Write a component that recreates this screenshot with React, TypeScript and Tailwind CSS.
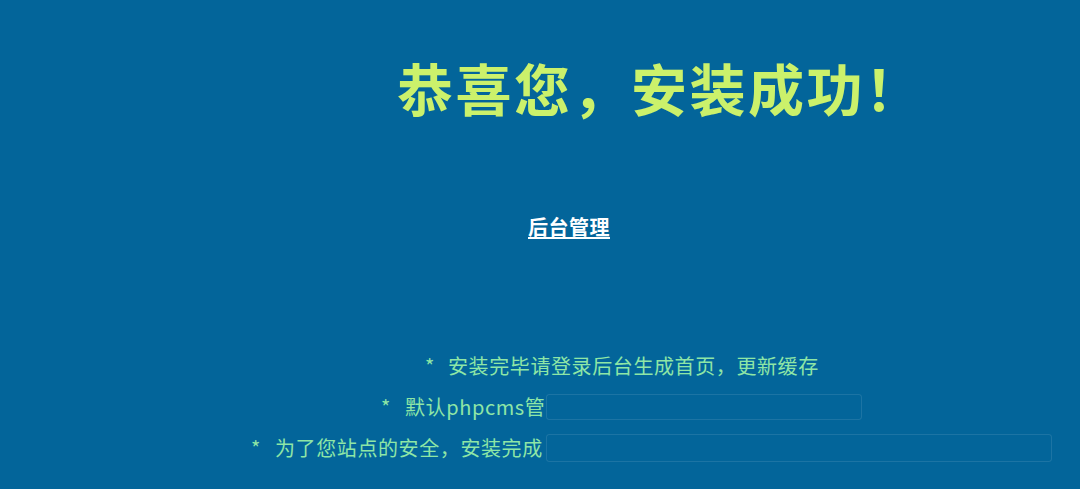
import React from "react";

const lineText = "text-[20px] leading-[28px] tracking-[0.6px] text-[#8ee6a6]";

const App: React.FC = () => {
  return (
    <div
      className="w-[1080px] h-[489px] overflow-hidden bg-[#03659a]"
      style={{ fontFamily: '"Noto Sans CJK SC", "Noto Sans", sans-serif' }}
    >
      {/* Title */}
      <h1 className="ml-[397px] pt-[57px] text-[56px] leading-[60px] tracking-[2.5px] font-bold text-[#cbf16b] whitespace-nowrap">
        恭喜您，安装成功！
      </h1>

      {/* Admin link */}
      <div className="mt-[98px] ml-[528px]">
        <a href="#" className="text-[20px] leading-[24px] tracking-[0.5px] font-bold text-white underline underline-offset-2">
          后台管理
        </a>
      </div>

      {/* Notes */}
      <div className="mt-[112px] flex flex-col gap-[13px]">
        <div className={`ml-[425px] flex items-center ${lineText}`}>
          <span className="w-[23px]">*</span>
          <span>安装完毕请登录后台生成首页，更新缓存</span>
        </div>
        <div className={`ml-[381px] flex items-center ${lineText}`}>
          <span className="w-[24px]">*</span>
          <span>默认phpcms管</span>
          <div className="ml-[1px] w-[316px] h-[26px] rounded-[3px] border border-white/10" />
        </div>
        <div className={`ml-[251px] flex items-center ${lineText}`}>
          <span className="w-[24px]">*</span>
          <span>为了您站点的安全，安装完成</span>
          <div className="ml-[3px] w-[506px] h-[28px] rounded-[3px] border border-white/10" />
        </div>
      </div>
    </div>
  );
};

export default App;
